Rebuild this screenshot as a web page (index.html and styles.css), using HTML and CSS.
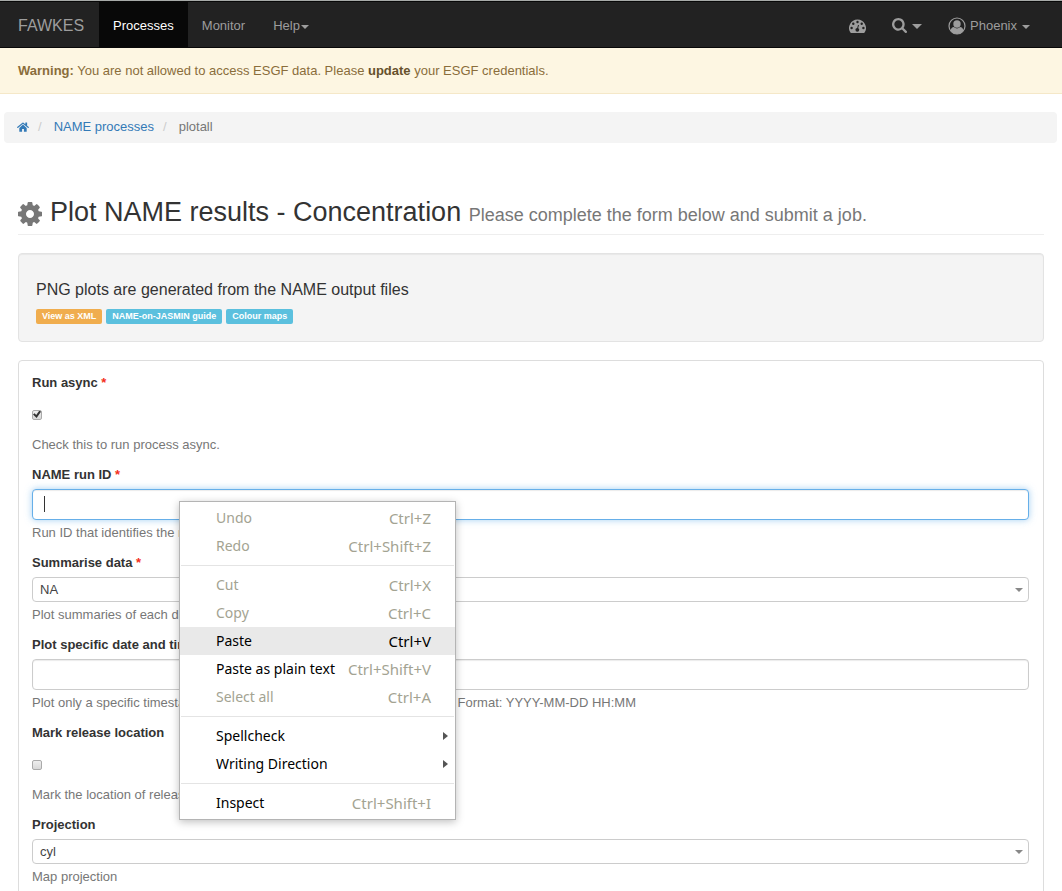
FILE: index.html
```html
<!DOCTYPE html>
<html lang="en">
<head>
<meta charset="utf-8">
<title>Plot NAME results</title>
<link rel="stylesheet" href="styles.css">
</head>
<body>
<nav class="navbar">
  <a class="brand" href="#">FAWKES</a>
  <div class="nav-left">
    <a class="nav-link active" href="#">Processes</a>
    <a class="nav-link" href="#">Monitor</a>
    <a class="nav-link" href="#">Help<span class="caret caret-tight"></span></a>
  </div>
  <div class="nav-right">
    <a class="nav-link" href="#" aria-label="Dashboard">
      <svg class="icon-gauge" viewBox="0 0 17 14"><path fill="currentColor" d="M8.500 0.500a8.500 8.500 0 0 0-7.100 13.100q.2.400.7.400h12.800q.5 0 .7-.4A8.500 8.500 0 0 0 8.500.5z"/><g fill="#222"><circle cx="2.600" cy="9" r="1.200"/><circle cx="4.300" cy="4.800" r="1.200"/><circle cx="8.500" cy="3" r="1.200"/><circle cx="12.700" cy="4.800" r="1.200"/><circle cx="14.400" cy="9" r="1.200"/><circle cx="8.300" cy="10.800" r="1.900"/></g><path d="M8.300 10.500L9.500 6" stroke="#222" stroke-width="1"/></svg>
    </a>
    <a class="nav-link" href="#" aria-label="Search">
      <svg class="icon-search" viewBox="64 128 1664 1664"><path fill="currentColor" d="M1216 832q0-185-131.500-316.500t-316.500-131.500-316.500 131.500-131.500 316.500 131.500 316.500 316.500 131.500 316.500-131.500 131.500-316.500zm512 832q0 52-38 90t-90 38q-54 0-90-38l-343-342q-179 124-399 124-143 0-273.500-55.500t-225-150-150-225-55.500-273.500 55.500-273.500 150-225 225-150 273.500-55.500 273.500 55.500 225 150 150 225 55.500 273.500q0 220-124 399l343 343q37 37 37 90z"/></svg>
      <span class="caret caret-large"></span>
    </a>
    <a class="nav-link" href="#">
      <svg class="icon-user" viewBox="0 0 18 18"><circle cx="9" cy="9" r="8" fill="none" stroke="currentColor" stroke-width="1.200"/><circle cx="9" cy="7" r="3.700" fill="currentColor"/><path fill="currentColor" d="M2.500 13.500Q3.300 10.200 5.800 10.100Q9 12.800 12.200 10.100Q14.700 10.200 15.500 13.500Q12.800 17 9 17Q5.200 17 2.500 13.500z"/></svg>
      <span class="user-name">Phoenix</span>
      <span class="caret"></span>
    </a>
  </div>
</nav>

<div class="alert"><strong>Warning:</strong> You are not allowed to access ESGF data. Please <a href="#">update</a> your ESGF credentials.</div>

<ol class="breadcrumb">
  <li><a href="#" aria-label="Home"><svg class="icon-home" viewBox="64 192 1664 1344"><path fill="currentColor" d="M1408 992v480q0 26-19 45t-45 19h-320v-384h-256v384h-320q-26 0-45-19t-19-45v-480q0-3 1-6l511-474 511 474q1 2 1 6zm300-69l-62 74q-8 9-21 11h-3q-13 0-21-7l-706-577-706 577q-12 8-24 7-13-2-21-11l-62-74q-8-10-7-23t11-22l733-599q32-26 76-26t76 26l244 204v-195q0-14 9-23t23-9h192q14 0 23 9t9 23v408l233 182q10 8 11 22t-7 23z"/></svg></a></li>
  <li><a href="#">NAME processes</a></li>
  <li>plotall</li>
</ol>

<main class="content">
  <header class="page-header">
    <svg class="icon-cog" viewBox="128 128 1536 1536"><path fill="currentColor" d="M1152 896q0-106-75-181t-181-75-181 75-75 181 75 181 181 75 181-75 75-181zm512-109v222q0 12-8 23t-20 13l-185 28q-19 54-39 91 35 50 107 138 10 12 10 25t-9 23q-27 37-99 108t-94 71q-12 0-26-9l-138-108q-44 23-91 38-16 136-29 186-7 28-36 28h-222q-14 0-24.500-8.500t-11.500-21.500l-28-184q-49-16-90-37l-141 107q-10 9-25 9-14 0-25-11-126-114-165-168-7-10-7-23 0-12 8-23 15-21 51-66.500t54-70.500q-27-50-41-99l-183-27q-13-2-21-12.500t-8-23.500v-222q0-12 8-23t19-13l186-28q14-46 39-92-40-57-107-138-10-12-10-24 0-10 9-23 26-36 98.500-107.500t94.500-71.500q13 0 26 10l138 107q44-23 91-38 16-136 29-186 7-28 36-28h222q14 0 24.500 8.500t11.500 21.500l28 184q49 16 90 37l142-107q9-9 24-9 13 0 25 10 129 119 165 170 7 8 7 22 0 12-8 23-15 21-51 66.500t-54 70.500q26 50 41 98l183 28q13 2 21 12.500t8 23.500z"/></svg>
    <h1>Plot NAME results - Concentration <small>Please complete the form below and submit a job.</small></h1>
  </header>

  <section class="well">
    <h2>PNG plots are generated from the NAME output files</h2>
    <div class="badges">
      <a class="badge badge-warning" href="#">View as XML</a>
      <a class="badge" href="#">NAME-on-JASMIN guide</a>
      <a class="badge" href="#">Colour maps</a>
    </div>
  </section>

  <form class="panel">
    <div class="group">
      <label for="async">Run async <span class="required">*</span></label>
      <div class="check-row"><input class="check" id="async" type="checkbox" checked></div>
      <p class="help">Check this to run process async.</p>
    </div>
    <div class="group">
      <label for="run-id">NAME run ID <span class="required">*</span></label>
      <div class="control"><input class="text-input focused" id="run-id" type="text"><span class="text-cursor"></span></div>
      <p class="help">Run ID that identifies the run</p>
    </div>
    <div class="group">
      <label for="summarise">Summarise data <span class="required">*</span></label>
      <div class="control"><select class="select" id="summarise"><option>NA</option></select><span class="select-arrow"></span></div>
      <p class="help">Plot summaries of each day</p>
    </div>
    <div class="group">
      <label for="timestamp">Plot specific date and time</label>
      <div class="control"><input class="text-input" id="timestamp" type="text"></div>
      <p class="help">Plot only a specific timestamp. Leave empty to plot all of the model times. Format: YYYY-MM-DD HH:MM</p>
    </div>
    <div class="group">
      <label for="mark">Mark release location</label>
      <div class="check-row"><input class="check" id="mark" type="checkbox"></div>
      <p class="help">Mark the location of release</p>
    </div>
    <div class="group">
      <label for="projection">Projection</label>
      <div class="control"><select class="select" id="projection"><option>cyl</option></select><span class="select-arrow"></span></div>
      <p class="help">Map projection</p>
    </div>
  </form>
</main>

<div class="menu" role="menu">
  <button class="item" disabled><span>Undo</span><span class="key">Ctrl+Z</span></button>
  <button class="item" disabled><span>Redo</span><span class="key">Ctrl+Shift+Z</span></button>
  <hr>
  <button class="item" disabled><span>Cut</span><span class="key">Ctrl+X</span></button>
  <button class="item" disabled><span>Copy</span><span class="key">Ctrl+C</span></button>
  <button class="item selected"><span>Paste</span><span class="key">Ctrl+V</span></button>
  <button class="item"><span>Paste as plain text</span><span class="key">Ctrl+Shift+V</span></button>
  <button class="item" disabled><span>Select all</span><span class="key">Ctrl+A</span></button>
  <hr>
  <button class="item submenu"><span>Spellcheck</span></button>
  <button class="item submenu"><span>Writing Direction</span></button>
  <hr>
  <button class="item"><span>Inspect</span><span class="key">Ctrl+Shift+I</span></button>
</div>
</body>
</html>
```
FILE: styles.css
```css
* { box-sizing: border-box; }
body {
  margin: 0;
  height: 100vh;
  overflow: hidden;
  position: relative;
  background: #fff;
  color: #333;
  font: 13px/18px "Liberation Sans", Arial, sans-serif;
}
a { color: #337ab7; text-decoration: none; }
svg { display: block; flex: none; }

.navbar {
  display: flex;
  height: 48px;
  padding: 1px 19px 0 18px;
  background: #222;
  border-top: 1px solid #a7aaa8;
  border-bottom: 1px solid #080808;
  box-shadow: inset 0 1px #080808;
}
.brand, .nav-link { display: flex; align-items: center; color: #9d9d9d; padding-top: 2px; }
.brand { font-size: 16px; padding-right: 15px; }
.nav-link { padding-left: 13px; padding-right: 13px; }
.nav-link.active { color: #fff; background: #080808; }
.nav-left { display: flex; }
.nav-left .nav-link { padding-left: 14px; padding-right: 14px; }
.nav-right { display: flex; margin-left: auto; }
.caret {
  border: 4px solid transparent;
  border-top-color: currentColor;
  border-bottom: 0;
  margin: 2px 0 0 5px;
}
.caret-tight { margin-left: 1px; }
.caret-large { border-width: 5px 5px 0; }
.icon-gauge { width: 17px; height: 14px; }
.icon-search { width: 15px; height: 15px; }
.icon-user { width: 18px; height: 18px; }
.user-name { margin-left: 4px; }

.alert {
  padding: 14px 18px 13px;
  background: #fdf6e2;
  border-bottom: 1px solid #f5e8c8;
  color: #8a6d3b;
}
.alert a { color: #66512c; font-weight: bold; }

.breadcrumb {
  display: flex;
  list-style: none;
  margin: 18px 5px 0 4px;
  padding: 6px 13px 7px;
  border-radius: 4px;
  background: #f4f4f4;
  color: #777;
}
.breadcrumb li { display: flex; align-items: center; }
.breadcrumb li + li::before { content: "/"; color: #ccc; padding: 0 12px 0 9px; }
.icon-home { width: 12px; height: 10px; }

.content { padding: 0 18px; }
.page-header {
  display: flex;
  align-items: center;
  gap: 8px;
  margin-top: 53px;
  padding-bottom: 3px;
  border-bottom: 1px solid #eee;
}
.page-header h1 { margin: 0; font-size: 27px; line-height: 32px; font-weight: normal; }
.page-header small { font-size: 18px; color: #777; }
.icon-cog { width: 24px; height: 24px; color: #777; }

.well {
  margin-top: 18px;
  padding: 26px 17px 17px;
  background: #f4f4f4;
  border: 1px solid #e3e3e3;
  border-radius: 4px;
  box-shadow: inset 0 1px 1px rgba(0, 0, 0, 0.05);
}
.well h2 { margin: 0; font-size: 16px; line-height: 20px; font-weight: normal; }
.badges { display: flex; gap: 4px; margin-top: 9px; }
.badge {
  padding: 0 6px;
  border-radius: 2px;
  background: #5bc0de;
  color: #fff;
  font-size: 9px;
  line-height: 15px;
  font-weight: bold;
}
.badge-warning { background: #f0ad4e; }

.panel {
  margin-top: 18px;
  padding: 13px 14px 12px 13px;
  border: 1px solid #ddd;
  border-radius: 4px;
}
.group { margin-bottom: 12px; }
.group label { display: block; margin-bottom: 5px; font-weight: bold; }
.required { color: #f33020; }
.help { margin: 4px 0 0; color: #777; }
.control { position: relative; }
.text-input, .select {
  display: block;
  width: 100%;
  border: 1px solid #ccc;
  border-radius: 4px;
  background: #fff;
  color: #444;
  font: inherit;
  outline: none;
  box-shadow: inset 0 1px 1px rgba(0, 0, 0, 0.08);
}
.text-input { height: 31px; padding: 5px 11px; }
.focused {
  border-color: #66afe9;
  box-shadow: inset 0 1px 1px rgba(0, 0, 0, 0.08), 0 0 7px rgba(102, 175, 233, 0.6);
}
.text-cursor { position: absolute; left: 12px; top: 7px; width: 1px; height: 16px; background: #333; }
.select { appearance: none; height: 25px; padding: 0 7px; box-shadow: none; }
.select-arrow {
  position: absolute;
  right: 6px;
  top: 11px;
  border: 4px solid transparent;
  border-top-color: #888;
  border-bottom: 0;
  pointer-events: none;
}
.check-row { display: flex; align-items: center; height: 35px; }
.check {
  appearance: none;
  display: grid;
  place-items: center;
  width: 10px;
  height: 10px;
  margin: 0;
  border: 1px solid #aaa;
  border-radius: 2px;
  background: linear-gradient(#eee, #d8d8d8);
}
.check:checked::before {
  content: "";
  width: 8px;
  height: 8px;
  background: #333;
  clip-path: polygon(0 50%, 20% 35%, 40% 55%, 80% 0, 100% 15%, 45% 95%);
}

.menu {
  position: absolute;
  left: 179px;
  top: 501px;
  width: 277px;
  padding: 2px 0;
  border: 1px solid #b4b4b4;
  background: #fff;
  box-shadow: 0 2px 8px rgba(0, 0, 0, 0.25);
}
.item {
  display: flex;
  align-items: center;
  justify-content: space-between;
  width: 100%;
  height: 28px;
  padding: 0 24px 0 36px;
  border: 0;
  background: none;
  color: #000;
  font: 14px/20px "Noto Sans", sans-serif;
}
.key { font-size: 15px; }
.key, .item:disabled { color: #a3a392; }
.selected { background: #e9e9e9; }
.selected .key { color: #000; }
.submenu { padding-right: 7px; }
.submenu::after {
  content: "";
  border: 4px solid transparent;
  border-left: 5px solid #555;
  border-right: 0;
}
.menu hr { margin: 5px 1px; border: 0; border-top: 1px solid #e4e4e4; }
```
